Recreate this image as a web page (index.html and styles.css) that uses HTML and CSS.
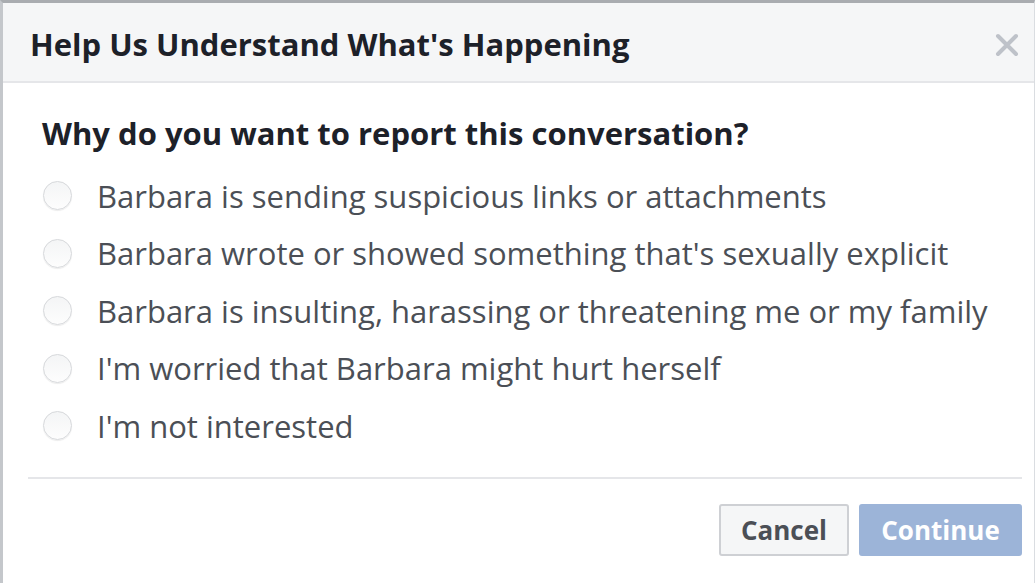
FILE: index.html
```html
<!DOCTYPE html>
<html>
<head>
<meta charset="utf-8">
<link rel="stylesheet" href="styles.css">
</head>
<body>
<div class="dialog">
  <div class="header">
    <span class="title">Help Us Understand What's Happening</span>
    <svg class="close" width="24" height="24" viewBox="0 0 24 24"><path d="M3 3 L21 21 M21 3 L3 21" stroke="#bec2c9" stroke-width="4" stroke-linecap="round"/></svg>
  </div>
  <div class="body">
    <div class="question">Why do you want to report this conversation?</div>
    <ul class="options">
      <li class="option"><span class="radio"></span><span>Barbara is sending suspicious links or attachments</span></li>
      <li class="option"><span class="radio"></span><span>Barbara wrote or showed something that's sexually explicit</span></li>
      <li class="option"><span class="radio"></span><span>Barbara is insulting, harassing or threatening me or my family</span></li>
      <li class="option"><span class="radio"></span><span>I'm worried that Barbara might hurt herself</span></li>
      <li class="option"><span class="radio"></span><span>I'm not interested</span></li>
    </ul>
  </div>
  <div class="footer">
    <button class="btn cancel">Cancel</button>
    <button class="btn continue">Continue</button>
  </div>
</div>
</body>
</html>
```
FILE: styles.css
```css
html, body {
  margin: 0;
  padding: 0;
  background: #ffffff;
}
body {
  font-family: "Open Sans", "Noto Sans", sans-serif;
  width: 1036px;
  height: 583px;
  overflow: hidden;
}
.dialog {
  box-sizing: border-box;
  width: 1035px;
  height: 583px;
  border-top: 3px solid #a9acb0;
  border-left: 3px solid #c4c7cb;
  border-right: 1px solid #dadde1;
  background: #fff;
}
.header {
  height: 78px;
  background: #f5f6f7;
  border-bottom: 2px solid #e5e6e9;
  display: flex;
  align-items: center;
  justify-content: space-between;
  padding: 0 15px 0 27px;
}
.title {
  font-weight: 700;
  font-size: 31px;
  color: #1d2129;
  margin-top: 4px;
}
.close {
  margin-top: 6px;
}
.body {
  padding: 30px 0 0 39px;
}
.question {
  font-weight: 700;
  font-size: 31px;
  color: #1d2129;
  line-height: 40px;
}
.options {
  list-style: none;
  margin: 14px 0 0 0;
  padding: 0;
}
.option {
  display: flex;
  align-items: center;
  height: 57.5px;
  font-size: 31px;
  color: #4b4f56;
}
.radio {
  box-sizing: border-box;
  width: 29px;
  height: 29px;
  border-radius: 50%;
  border: 1px solid #d6d8db;
  background: linear-gradient(#f4f5f6, #fdfdfd);
  box-shadow: 0 1px 1px rgba(0,0,0,0.08);
  margin: 0 25px 0 1px;
  flex: none;
}
.footer {
  margin: 22px 12px 0 25px;
  border-top: 2px solid #e5e6e9;
  display: flex;
  justify-content: flex-end;
  gap: 10px;
  padding-top: 25px;
}
.btn {
  font-family: "Open Sans", "Noto Sans", sans-serif;
  font-weight: 700;
  font-size: 26px;
  height: 52px;
  border-radius: 3px;
  padding: 0 18px;
}
.cancel {
  background: #f5f6f7;
  border: 2px solid #ced0d4;
  color: #4b4f56;
  width: 130px;
}
.continue {
  background: #9cb4d8;
  border: 2px solid #9cb4d8;
  color: #ffffff;
  width: 163px;
}
```
